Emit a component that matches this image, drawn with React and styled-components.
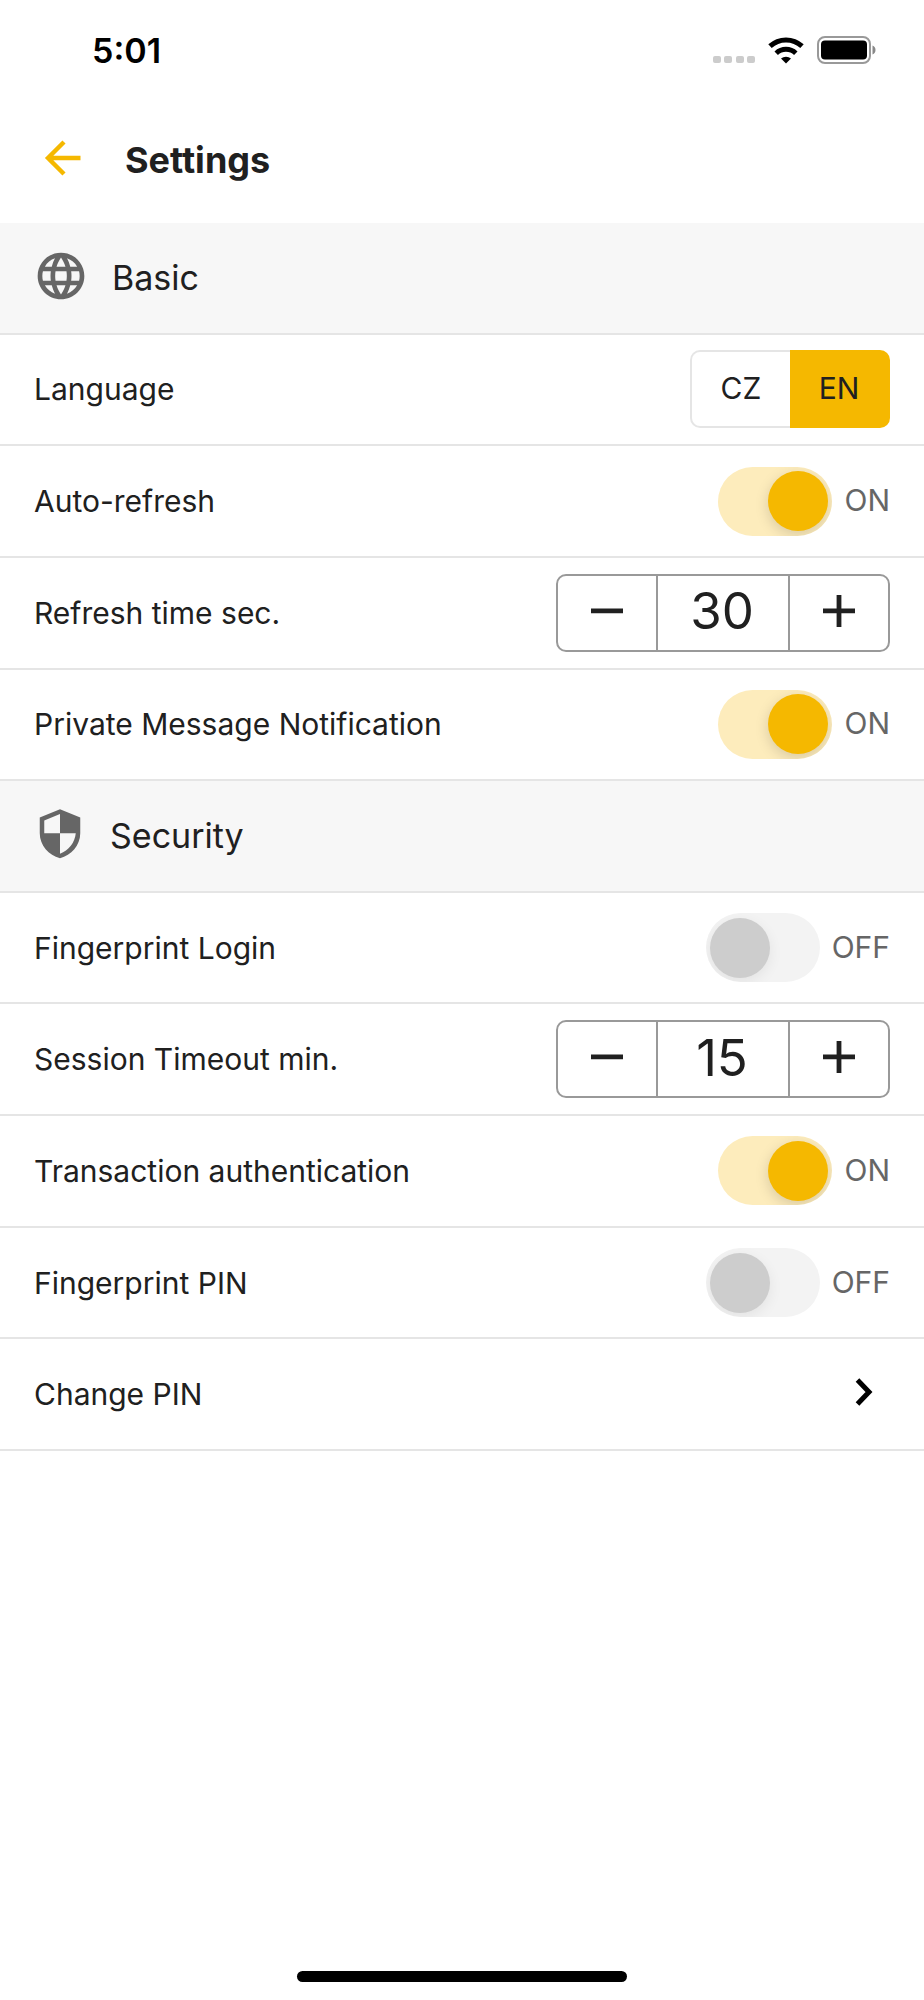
import React, { useState } from 'react'
import styled, { createGlobalStyle } from 'styled-components'

const GlobalStyle = createGlobalStyle`
    * {
        box-sizing: border-box;
    }
    body {
        margin: 0;
        background: #fff;
        color: #202020;
        font-family: Inter, "Liberation Sans", sans-serif;
        font-size: 30px;
    }
    button, input {
        font: inherit;
        color: inherit;
    }
`

const Screen = styled.div`
    display: flex;
    flex-direction: column;
    min-height: 100vh;
`

const StatusBar = styled.div`
    display: flex;
    align-items: center;
    justify-content: space-between;
    height: 100px;
    padding: 0 48px 0 92px;
    color: #000;
`

const Time = styled.span`
    font-size: 34px;
    font-weight: 600;
`

const StatusIcons = styled.div`
    display: flex;
    align-items: flex-end;
    gap: 13px;

    svg {
        display: block;
    }
`

const Header = styled.header`
    display: flex;
    align-items: center;
    gap: 43px;
    height: 123px;
    padding: 0 43px 4px;
`

const BackButton = styled.button`
    display: flex;
    padding: 0 0 3px;
    border: 0;
    background: none;
    color: #f5b800;
`

const Title = styled.h1`
    margin: 0;
    font-size: 36px;
    font-weight: 700;
`

const List = styled.main`
    display: grid;
    grid-auto-rows: 1fr;
    min-height: 1228px;
`

const SectionRow = styled.div`
    display: flex;
    align-items: center;
    gap: 23px;
    padding: 0 33px;
    background: #f7f7f7;
    border-bottom: 2px solid #e5e5e5;

    svg {
        margin-bottom: 4px;
        fill: #666;
    }
`

const SectionTitle = styled.h2`
    margin: 0;
    font-size: 34px;
    font-weight: 400;
`

const SettingRow = styled.div`
    display: flex;
    align-items: center;
    justify-content: space-between;
    padding: 0 34px;
    border-bottom: 2px solid #e5e5e5;
`

const LinkRow = styled(SettingRow).attrs({ as: 'a' })`
    padding-right: 51px;
    color: inherit;
    text-decoration: none;

    svg {
        margin-bottom: 4px;
    }
`

const Segments = styled.div`
    display: grid;
    grid-template-columns: 1fr 1fr;
    width: 200px;
    height: 78px;
`

const Segment = styled.button`
    padding: 0 0 2px;
    border: 2px solid ${({ $active }) => ($active ? '#f5b800' : '#e5e5e5')};
    background: ${({ $active }) => ($active ? '#f5b800' : '#fff')};

    &:first-child {
        border-radius: 10px 0 0 10px;
        border-right-width: 0;
    }
    &:last-child {
        border-radius: 0 10px 10px 0;
        border-left-width: 0;
    }
`

const SwitchBox = styled.div`
    display: flex;
    align-items: center;
    gap: 12px;
`

const SwitchInput = styled.input`
    appearance: none;
    display: flex;
    align-items: center;
    width: 114px;
    height: 69px;
    margin: 0;
    padding: 0 4px;
    border-radius: 35px;
    overflow: hidden;
    background: #f3f3f3;

    &::before {
        content: '';
        width: 60px;
        height: 60px;
        border-radius: 50%;
        background: #cdcdcd;
        box-shadow: 0 4px 14px rgba(0, 0, 0, 0.07);
    }
    &:checked {
        justify-content: flex-end;
        background: #fdecbc;
    }
    &:checked::before {
        background: #f5b800;
        box-shadow: 0 4px 14px rgba(0, 0, 0, 0.15);
    }
`

const SwitchState = styled.span`
    padding-bottom: 2px;
    color: #666;
`

const StepperBox = styled.div`
    display: flex;
    width: 334px;
    height: 78px;
    border: 2px solid #999;
    border-radius: 10px;
    overflow: hidden;
`

const StepButton = styled.button`
    display: flex;
    flex: 1;
    align-items: center;
    justify-content: center;
    padding: 0 0 4px;
    border: 0;
    background: none;
`

const StepValue = styled.input`
    width: 134px;
    padding: 0 2px 4px 0;
    border: solid #999;
    border-width: 0 2px;
    background: none;
    font-size: 51px;
    text-align: center;
`

const HomeIndicator = styled.div`
    width: 330px;
    height: 11px;
    margin: auto auto 18px;
    border-radius: 6px;
    background: #000;
`

const SignalIcon = () => (
    <svg width="42" height="8" fill="#ccc">
        {[0, 11, 23, 34].map(x => <rect key={x} x={x} width="8" height="7" rx="2" />)}
    </svg>
)

const WifiIcon = () => (
    <svg width="36" height="28" viewBox="0 0 36 28" fill="none" stroke="#000" strokeWidth="5">
        <path d="M2 10.2a23.5 23.5 0 0 1 32 0" />
        <path d="M8.2 17.2a14.3 14.3 0 0 1 19.6 0" />
        <path d="M13 22.6a7.4 7.4 0 0 1 10 0L18 27.5z" fill="#000" stroke="none" />
    </svg>
)

const BatteryIcon = () => (
    <svg width="59" height="28" viewBox="0 0 59 28">
        <rect x="1" y="1" width="52" height="26" rx="7" fill="none" stroke="#999" strokeWidth="2" />
        <rect x="4" y="4.5" width="46" height="19" rx="4" />
        <path d="M55.500 9.500c4 1.500 4 7.500 0 9z" fill="#888" />
    </svg>
)

const BackIcon = () => (
    <svg width="39" height="36" viewBox="0 0 39 36" fill="none" stroke="currentColor" strokeWidth="4.4">
        <path d="M21 2L5 18l16 16M4.500 18h33" />
    </svg>
)

const GlobeIcon = () => (
    <svg width="56" height="56" viewBox="0 0 24 24">
        <path d="M11.99 2C6.47 2 2 6.48 2 12s4.47 10 9.990 10C17.52 22 22 17.52 22 12S17.52 2 11.99 2zm6.930 6h-2.950c-.32-1.250-.78-2.450-1.380-3.560 1.840.63 3.370 1.910 4.330 3.560zM12 4.040c.83 1.200 1.480 2.530 1.910 3.960h-3.820c.43-1.430 1.080-2.760 1.910-3.960zM4.260 14C4.100 13.360 4 12.690 4 12s.1-1.360.26-2h3.380c-.08.66-.14 1.320-.14 2s.06 1.340.14 2H4.260zm.82 2h2.950c.32 1.250.78 2.450 1.380 3.560-1.840-.63-3.370-1.900-4.330-3.560zm2.950-8H5.080c.96-1.660 2.490-2.930 4.330-3.560C8.810 5.550 8.350 6.750 8.030 8zM12 19.960c-.83-1.200-1.480-2.530-1.910-3.960h3.820c-.43 1.430-1.080 2.760-1.910 3.960zM14.340 14H9.660c-.09-.66-.16-1.320-.16-2s.07-1.350.16-2h4.680c.09.65.16 1.320.16 2s-.07 1.340-.16 2zm.25 5.560c.6-1.110 1.060-2.310 1.380-3.560h2.950c-.96 1.650-2.490 2.930-4.330 3.560zM16.360 14c.08-.66.14-1.320.14-2s-.06-1.340-.14-2h3.380c.16.64.26 1.310.26 2s-.1 1.360-.26 2h-3.380z" />
    </svg>
)

const ShieldIcon = () => (
    <svg width="54" height="54" viewBox="0 0 24 24">
        <path
            fillRule="evenodd"
            d="M12 1L3 4.700v7C3 17 7 21.600 12 22.800c5-1.200 9-5.800 9-11.100v-7zM12 3.100v8.600H5V6zM12 11.700h7c-.3 4-3.200 7.800-7 9.100z"
        />
    </svg>
)

const ChevronIcon = () => (
    <svg width="18" height="28" viewBox="0 0 18 28" fill="none" stroke="#000" strokeWidth="5">
        <path d="M2.500 2L14 14 2.500 26" />
    </svg>
)

const MinusIcon = () => (
    <svg width="32" height="32" fill="currentColor">
        <path d="M0 13.500h32v4.800H0z" />
    </svg>
)

const PlusIcon = () => (
    <svg width="32" height="32" fill="currentColor">
        <path d="M0 13.500h13.600V0h4.800v13.500H32v4.800H18.400V32h-4.800V18.300H0z" />
    </svg>
)

const Switch = ({ id, label, defaultOn }) => {
    const [on, setOn] = useState(Boolean(defaultOn))
    return (
        <SettingRow>
            <label htmlFor={id}>{label}</label>
            <SwitchBox>
                <SwitchInput
                    id={id}
                    type="checkbox"
                    role="switch"
                    checked={on}
                    onChange={() => setOn(!on)}
                />
                <SwitchState>{on ? 'ON' : 'OFF'}</SwitchState>
            </SwitchBox>
        </SettingRow>
    )
}

const Stepper = ({ id, label, defaultValue }) => {
    const [value, setValue] = useState(defaultValue)
    return (
        <SettingRow>
            <label htmlFor={id}>{label}</label>
            <StepperBox>
                <StepButton aria-label="Decrease" onClick={() => setValue(Math.max(0, value - 1))}>
                    <MinusIcon />
                </StepButton>
                <StepValue
                    id={id}
                    inputMode="numeric"
                    value={value}
                    onChange={e => setValue(Number(e.target.value) || 0)}
                />
                <StepButton aria-label="Increase" onClick={() => setValue(value + 1)}>
                    <PlusIcon />
                </StepButton>
            </StepperBox>
        </SettingRow>
    )
}

const Language = () => {
    const [language, setLanguage] = useState('EN')
    return (
        <SettingRow>
            <span id="language">Language</span>
            <Segments role="group" aria-labelledby="language">
                {['CZ', 'EN'].map(code => (
                    <Segment
                        key={code}
                        $active={code === language}
                        aria-pressed={code === language}
                        onClick={() => setLanguage(code)}
                    >
                        {code}
                    </Segment>
                ))}
            </Segments>
        </SettingRow>
    )
}

const App = () => (
    <Screen>
        <GlobalStyle />
        <StatusBar>
            <Time>5:01</Time>
            <StatusIcons>
                <SignalIcon />
                <WifiIcon />
                <BatteryIcon />
            </StatusIcons>
        </StatusBar>
        <Header>
            <BackButton aria-label="Back"><BackIcon /></BackButton>
            <Title>Settings</Title>
        </Header>
        <List>
            <SectionRow>
                <GlobeIcon />
                <SectionTitle>Basic</SectionTitle>
            </SectionRow>
            <Language />
            <Switch id="auto-refresh" label="Auto-refresh" defaultOn />
            <Stepper id="refresh-time" label="Refresh time sec." defaultValue={30} />
            <Switch id="notification" label="Private Message Notification" defaultOn />
            <SectionRow>
                <ShieldIcon />
                <SectionTitle>Security</SectionTitle>
            </SectionRow>
            <Switch id="fingerprint-login" label="Fingerprint Login" />
            <Stepper id="session-timeout" label="Session Timeout min." defaultValue={15} />
            <Switch id="transaction-auth" label="Transaction authentication" defaultOn />
            <Switch id="fingerprint-pin" label="Fingerprint PIN" />
            <LinkRow href="#change-pin">
                Change PIN
                <ChevronIcon />
            </LinkRow>
        </List>
        <HomeIndicator />
    </Screen>
)

export default App;
